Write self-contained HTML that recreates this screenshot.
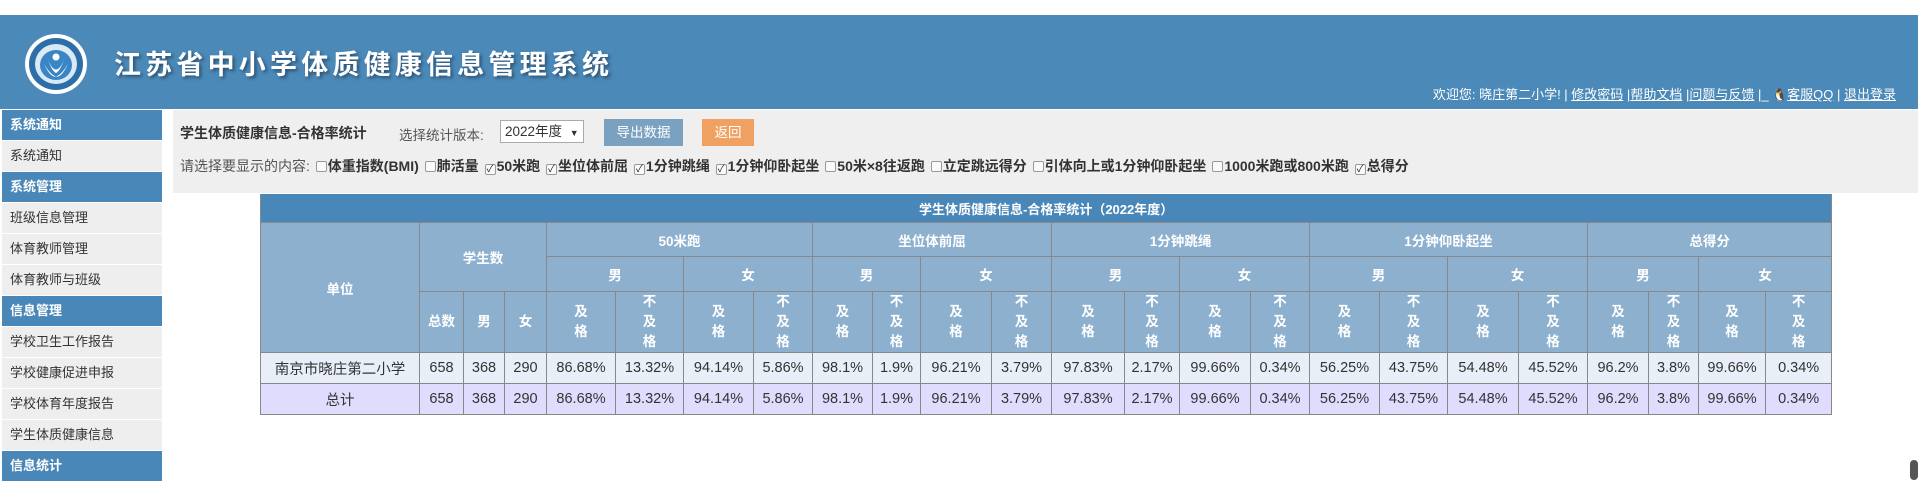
<!DOCTYPE html>
<html><head><meta charset="utf-8"><style>
*{margin:0;padding:0;box-sizing:border-box}
body{width:1920px;height:480px;overflow:hidden;background:#fff;font-family:"Liberation Sans","Noto Sans CJK SC",sans-serif;font-size:13px;color:#333;position:relative}
#hdr{position:absolute;left:0;top:15px;width:1918px;height:94px;background:#4b89b8}
#title{position:absolute;left:114px;top:28px;color:#fff;font-size:27px;letter-spacing:4.2px;font-weight:bold;text-shadow:2px 2px 3px #2a4f70;font-family:"Noto Sans CJK SC",sans-serif}
#links{position:absolute;right:22px;top:69px;color:#fff;font-size:13px}
#links u{text-decoration:underline}
#side{position:absolute;left:2px;top:110px;width:160px}
#side div{height:30px;line-height:30px;margin-bottom:1px;padding-left:8px;font-size:13px}
#side .h{background:#4a87b9;color:#fff;font-weight:bold}
#side .i{background:#eee;color:#333}
#panel{position:absolute;left:173px;top:110px;width:1745px;height:83px;background:#efefef}
#t1{position:absolute;left:7px;top:13px;font-weight:bold;font-size:14px}
#t2{position:absolute;left:226px;top:14px;color:#555;font-size:13.5px}
#sel{position:absolute;left:327px;top:10px;width:84px;height:23px;background:#fff;border:1px solid #aaa;padding-left:4px;line-height:21px;font-size:13.5px}
#b1{position:absolute;left:431px;top:9px;width:79px;height:27px;background:#7aa1c0;color:#fff;line-height:27px;text-align:center;font-size:13.5px}
#b2{position:absolute;left:529px;top:9px;width:52px;height:27px;background:#f0a060;color:#fff;line-height:27px;text-align:center;font-size:13.5px}
#cb{position:absolute;left:7px;top:46px;font-size:14px;color:#555;white-space:nowrap}
#cb b{color:#333}
.c{display:inline-block;width:11px;height:11px;border:1px solid #999;border-radius:2px;background:#fafafa;vertical-align:-1px;margin:0 1px 0 2px;font-size:10px;line-height:9px;text-align:center;color:#222;font-weight:normal}
table{position:absolute;left:260px;top:194px;border-collapse:collapse;table-layout:fixed;width:1572px}
td{border:1.5px solid #888;text-align:center;padding:0}
.tt td{background:#4a87b9;color:#fff;font-weight:bold;height:28px;border-color:#4a87b9 #888 #888 #888}
.hh td{background:#8db0cf;color:#fff;font-weight:bold;font-size:13.5px}
.d1 td{background:#e9eff8;height:31px;font-size:14.5px}
.d2 td{background:#dfdcfd;height:31px;font-size:14.5px}
.sc{position:absolute;right:2px;top:460px;width:8px;height:20px;background:#555;border-radius:4px}
</style></head><body>
<div id="hdr">
<svg style="position:absolute;left:24px;top:18px" width="64" height="62" viewBox="0 0 64 62">
<ellipse cx="32" cy="31" rx="31" ry="30" fill="#fff"/>
<ellipse cx="32" cy="31" rx="27" ry="26" fill="#2b6ea8"/>
<ellipse cx="32" cy="31" rx="21" ry="20" fill="#dbe9f5"/>
<ellipse cx="32" cy="32" rx="16" ry="15" fill="#3a86c4"/>
<circle cx="32" cy="24" r="3.5" fill="#fff"/>
<path d="M24 27 Q32 46 40 27 Q36 38 32 40 Q28 38 24 27Z" fill="#fff"/>
<path d="M20 31 Q26 44 32 44 Q25 40 20 31Z" fill="#fff"/>
<path d="M44 31 Q38 44 32 44 Q39 40 44 31Z" fill="#fff"/>
</svg>
<div id="title">江苏省中小学体质健康信息管理系统</div>
<div id="links">欢迎您: 晓庄第二小学! | <u>修改密码</u> |<u>帮助文档</u> |<u>问题与反馈</u> |_ <span style="font-size:12px">🐧</span><u>客服QQ</u> | <u>退出登录</u></div>
</div>
<div id="side">
<div class="h">系统通知</div><div class="i">系统通知</div>
<div class="h">系统管理</div><div class="i">班级信息管理</div><div class="i">体育教师管理</div><div class="i">体育教师与班级</div>
<div class="h">信息管理</div><div class="i">学校卫生工作报告</div><div class="i">学校健康促进申报</div><div class="i">学校体育年度报告</div><div class="i">学生体质健康信息</div>
<div class="h">信息统计</div>
</div>
<div id="panel">
<div id="t1">学生体质健康信息-合格率统计</div>
<div id="t2">选择统计版本:</div>
<div id="sel">2022年度 <span style="font-size:9px;margin-left:4px">▼</span></div>
<div id="b1">导出数据</div><div id="b2">返回</div>
<div id="cb">请选择要显示的内容: <span class="c"></span><b>体重指数(BMI)</b> <span class="c"></span><b>肺活量</b> <span class="c">✓</span><b>50米跑</b> <span class="c">✓</span><b>坐位体前屈</b> <span class="c">✓</span><b>1分钟跳绳</b> <span class="c">✓</span><b>1分钟仰卧起坐</b> <span class="c"></span><b>50米×8往返跑</b> <span class="c"></span><b>立定跳远得分</b> <span class="c"></span><b>引体向上或1分钟仰卧起坐</b> <span class="c"></span><b>1000米跑或800米跑</b> <span class="c">✓</span><b>总得分</b></div>
</div>
<table>
<colgroup><col style="width:159px"><col style="width:44px"><col style="width:41px"><col style="width:42px"><col style="width:69px"><col style="width:68px"><col style="width:70px"><col style="width:59px"><col style="width:60px"><col style="width:48px"><col style="width:71px"><col style="width:60px"><col style="width:73px"><col style="width:55px"><col style="width:71px"><col style="width:59px"><col style="width:70px"><col style="width:68px"><col style="width:71px"><col style="width:69px"><col style="width:61px"><col style="width:50px"><col style="width:67px"><col style="width:66px"></colgroup>
<tr class="tt"><td colspan="24">学生体质健康信息-合格率统计（2022年度）</td></tr>
<tr class="hh" style="height:34px"><td rowspan="3">单位</td><td colspan="3" rowspan="2">学生数</td><td colspan="4">50米跑</td><td colspan="4">坐位体前屈</td><td colspan="4">1分钟跳绳</td><td colspan="4">1分钟仰卧起坐</td><td colspan="4">总得分</td></tr>
<tr class="hh" style="height:35px"><td colspan="2">男</td><td colspan="2">女</td><td colspan="2">男</td><td colspan="2">女</td><td colspan="2">男</td><td colspan="2">女</td><td colspan="2">男</td><td colspan="2">女</td><td colspan="2">男</td><td colspan="2">女</td></tr>
<tr class="hh" style="height:61px;line-height:20px"><td>总数</td><td>男</td><td>女</td>
<td>及<br>格</td><td>不<br>及<br>格</td><td>及<br>格</td><td>不<br>及<br>格</td>
<td>及<br>格</td><td>不<br>及<br>格</td><td>及<br>格</td><td>不<br>及<br>格</td>
<td>及<br>格</td><td>不<br>及<br>格</td><td>及<br>格</td><td>不<br>及<br>格</td>
<td>及<br>格</td><td>不<br>及<br>格</td><td>及<br>格</td><td>不<br>及<br>格</td>
<td>及<br>格</td><td>不<br>及<br>格</td><td>及<br>格</td><td>不<br>及<br>格</td></tr>
<tr class="d1"><td>南京市晓庄第二小学</td><td>658</td><td>368</td><td>290</td><td>86.68%</td><td>13.32%</td><td>94.14%</td><td>5.86%</td><td>98.1%</td><td>1.9%</td><td>96.21%</td><td>3.79%</td><td>97.83%</td><td>2.17%</td><td>99.66%</td><td>0.34%</td><td>56.25%</td><td>43.75%</td><td>54.48%</td><td>45.52%</td><td>96.2%</td><td>3.8%</td><td>99.66%</td><td>0.34%</td></tr>
<tr class="d2"><td>总计</td><td>658</td><td>368</td><td>290</td><td>86.68%</td><td>13.32%</td><td>94.14%</td><td>5.86%</td><td>98.1%</td><td>1.9%</td><td>96.21%</td><td>3.79%</td><td>97.83%</td><td>2.17%</td><td>99.66%</td><td>0.34%</td><td>56.25%</td><td>43.75%</td><td>54.48%</td><td>45.52%</td><td>96.2%</td><td>3.8%</td><td>99.66%</td><td>0.34%</td></tr>
</table>
<div class="sc"></div>
</body></html>
